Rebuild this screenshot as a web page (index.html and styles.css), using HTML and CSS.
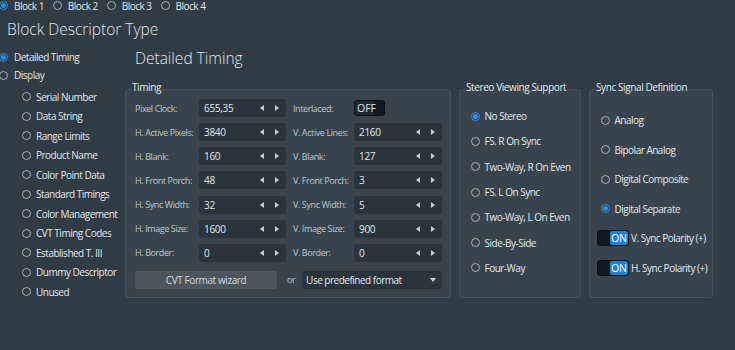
FILE: index.html
```html
<!DOCTYPE html>
<html lang="en">
<head>
    <meta charset="UTF-8">
    <title>Block Descriptor Type</title>
    <link rel="stylesheet" href="styles.css">
</head>
<body>

<div class="tabs">
    <div class="radio checked"><span class="dot"></span>Block 1</div>
    <div class="radio"><span class="dot"></span>Block 2</div>
    <div class="radio"><span class="dot"></span>Block 3</div>
    <div class="radio"><span class="dot"></span>Block 4</div>
</div>

<h1 class="page-title">Block Descriptor Type</h1>

<div class="main">
    <div class="types">
        <div class="radio top checked"><span class="dot"></span>Detailed Timing</div>
        <div class="radio top"><span class="dot"></span>Display</div>
        <div class="sub">
            <div class="radio"><span class="dot"></span>Serial Number</div>
            <div class="radio"><span class="dot"></span>Data String</div>
            <div class="radio"><span class="dot"></span>Range Limits</div>
            <div class="radio"><span class="dot"></span>Product Name</div>
            <div class="radio"><span class="dot"></span>Color Point Data</div>
            <div class="radio"><span class="dot"></span>Standard Timings</div>
            <div class="radio"><span class="dot"></span>Color Management</div>
            <div class="radio"><span class="dot"></span>CVT Timing Codes</div>
            <div class="radio"><span class="dot"></span>Established T. III</div>
            <div class="radio"><span class="dot"></span>Dummy Descriptor</div>
            <div class="radio"><span class="dot"></span>Unused</div>
        </div>
    </div>

    <div class="content">
        <h2 class="section-title">Detailed Timing</h2>

        <div class="groups">
            <fieldset class="group timing">
                <legend>Timing</legend>
                <div class="timing-grid">
                    <span class="lbl">Pixel Clock:</span>
                    <div class="spin"><span class="val">655,35</span><span class="arr-l"></span><span class="arr-r"></span></div>
                    <span class="lbl">Interlaced:</span>
                    <div><div class="toggle off"><span class="knob">OFF</span></div></div>

                    <span class="lbl">H. Active Pixels:</span>
                    <div class="spin"><span class="val">3840</span><span class="arr-l"></span><span class="arr-r"></span></div>
                    <span class="lbl">V. Active Lines:</span>
                    <div class="spin"><span class="val">2160</span><span class="arr-l"></span><span class="arr-r"></span></div>

                    <span class="lbl">H. Blank:</span>
                    <div class="spin"><span class="val">160</span><span class="arr-l"></span><span class="arr-r"></span></div>
                    <span class="lbl">V. Blank:</span>
                    <div class="spin"><span class="val">127</span><span class="arr-l"></span><span class="arr-r"></span></div>

                    <span class="lbl">H. Front Porch:</span>
                    <div class="spin"><span class="val">48</span><span class="arr-l"></span><span class="arr-r"></span></div>
                    <span class="lbl">V. Front Porch:</span>
                    <div class="spin"><span class="val">3</span><span class="arr-l"></span><span class="arr-r"></span></div>

                    <span class="lbl">H. Sync Width:</span>
                    <div class="spin"><span class="val">32</span><span class="arr-l"></span><span class="arr-r"></span></div>
                    <span class="lbl">V. Sync Width:</span>
                    <div class="spin"><span class="val">5</span><span class="arr-l"></span><span class="arr-r"></span></div>

                    <span class="lbl">H. Image Size:</span>
                    <div class="spin"><span class="val">1600</span><span class="arr-l"></span><span class="arr-r"></span></div>
                    <span class="lbl">V. Image Size:</span>
                    <div class="spin"><span class="val">900</span><span class="arr-l"></span><span class="arr-r"></span></div>

                    <span class="lbl">H. Border:</span>
                    <div class="spin"><span class="val">0</span><span class="arr-l"></span><span class="arr-r"></span></div>
                    <span class="lbl">V. Border:</span>
                    <div class="spin"><span class="val">0</span><span class="arr-l"></span><span class="arr-r"></span></div>
                </div>
                <div class="timing-foot">
                    <button class="btn">CVT Format wizard</button>
                    <span class="or">or</span>
                    <div class="combo"><span>Use predefined format</span><span class="arr-d"></span></div>
                </div>
            </fieldset>

            <fieldset class="group stereo">
                <legend>Stereo Viewing Support</legend>
                <div class="stereo-list">
                    <div class="radio checked"><span class="dot"></span>No Stereo</div>
                    <div class="radio"><span class="dot"></span>FS. R On Sync</div>
                    <div class="radio"><span class="dot"></span>Two-Way, R On Even</div>
                    <div class="radio"><span class="dot"></span>FS. L On Sync</div>
                    <div class="radio"><span class="dot"></span>Two-Way, L On Even</div>
                    <div class="radio"><span class="dot"></span>Side-By-Side</div>
                    <div class="radio"><span class="dot"></span>Four-Way</div>
                </div>
            </fieldset>

            <fieldset class="group sync">
                <legend>Sync Signal Definition</legend>
                <div class="sync-list">
                    <div class="radio"><span class="dot"></span>Analog</div>
                    <div class="radio"><span class="dot"></span>Bipolar Analog</div>
                    <div class="radio"><span class="dot"></span>Digital Composite</div>
                    <div class="radio checked"><span class="dot"></span>Digital Separate</div>
                    <div class="switch-row"><div class="toggle on"><span class="knob">ON</span></div>V. Sync Polarity (+)</div>
                    <div class="switch-row"><div class="toggle on"><span class="knob">ON</span></div>H. Sync Polarity (+)</div>
                </div>
            </fieldset>
        </div>
    </div>
</div>

</body>
</html>
```

FILE: styles.css
```css
* {
    box-sizing: border-box;
}
body {
    margin: 0;
    width: 735px;
    height: 350px;
    overflow: hidden;
    background-color: #2f3b45;
    color: #e2e7ea;
    font-family: "Open Sans", "Noto Sans", sans-serif;
    font-size: 10px;
    letter-spacing: -0.5px;
}

/* radio buttons */
.radio {
    display: flex;
    align-items: center;
    gap: 5px;
    white-space: nowrap;
}
.dot {
    flex: none;
    width: 9px;
    height: 9px;
    border: 1.3px solid #a7afb5;
    border-radius: 50%;
}
.checked .dot {
    border-color: #2e8de3;
    background: radial-gradient(circle, #2e8de3 0 2.1px, transparent 2.7px);
}

.tabs {
    display: flex;
    align-items: center;
    height: 11px;
    margin-left: -1px;
    gap: 9px;
}
.tabs .radio {
    gap: 6px;
}
.page-title {
    margin: 7px 0 0 7px;
    font-size: 15.5px;
    line-height: 22px;
    font-weight: 300;
    letter-spacing: 0;
}

.main {
    display: flex;
}
.types {
    width: 125px;
    flex: none;
    padding-top: 8px;
}
.types .top {
    height: 18px;
    gap: 6px;
    margin-left: -1px;
}
.sub {
    margin-top: 3px;
    padding-left: 22px;
}
.sub .radio {
    height: 19.5px;
}

.content {
    flex: 1;
    padding-top: 7px;
}
.section-title {
    margin: 0 0 11.5px 10px;
    font-size: 15.5px;
    line-height: 22px;
    font-weight: 300;
    letter-spacing: 0;
}

.groups {
    display: flex;
    gap: 8px;
}
.group {
    margin: 0;
    padding: 0;
    min-width: 0;
    border: 1px solid #45515a;
    border-radius: 3px;
    background-color: #38444d;
}
.group legend {
    margin-left: 5px;
    padding: 0 1px 6px;
    line-height: 12px;
    font-size: 10px;
    font-weight: 500;
    letter-spacing: -0.4px;
    color: #e6eaec;
}
.timing {
    width: 326px;
}
.stereo {
    width: 122px;
}
.sync {
    width: 124px;
}

/* timing grid */
.timing-grid {
    display: grid;
    grid-template-columns: 57px 87px 54px 88px;
    grid-auto-rows: 18px;
    column-gap: 7px;
    row-gap: 6.17px;
    align-items: center;
    margin-top: 0.5px;
    padding: 0 8px 0 9px;
}
.lbl {
    font-size: 9px;
    letter-spacing: -0.4px;
    color: #bcc4c9;
    white-space: nowrap;
}
.spin {
    display: flex;
    align-items: center;
    height: 18px;
    background-color: #2a343c;
    border-radius: 2px;
    padding: 0 4px 0 5px;
    letter-spacing: -0.3px;
}
.val {
    flex: 1;
}
.arr-l, .arr-r {
    width: 0;
    height: 0;
    border-top: 3px solid transparent;
    border-bottom: 3px solid transparent;
}
.arr-l {
    border-right: 4px solid #c9d0d5;
    margin-right: 11px;
}
.arr-r {
    border-left: 4px solid #c9d0d5;
    margin-right: 3px;
}

.timing-foot {
    display: flex;
    align-items: center;
    gap: 10px;
    margin-top: 9px;
    padding: 0 8px 8.5px 9px;
}
.btn {
    width: 142px;
    height: 18px;
    border: none;
    border-radius: 2px;
    background-color: #4a555d;
    color: #d3d9dd;
    font-family: inherit;
    font-size: 10px;
    letter-spacing: -0.4px;
    padding: 0;
}
.or {
    font-size: 9px;
    color: #bcc4c9;
    margin-right: -3px;
}
.combo {
    flex: 1;
    display: flex;
    align-items: center;
    height: 18px;
    padding: 0 6px 0 4px;
    background-color: #2a343c;
    border-radius: 2px;
}
.combo span:first-child {
    flex: 1;
}
.arr-d {
    width: 0;
    height: 0;
    border-left: 3.5px solid transparent;
    border-right: 3.5px solid transparent;
    border-top: 4px solid #c9d0d5;
}

/* stereo + sync */
.stereo-list {
    padding: 5px 0 0 10.5px;
}
.stereo-list .radio {
    height: 25.3px;
}
.sync-list {
    padding: 6.75px 0 0 10.5px;
}
.sync-list .radio, .switch-row {
    height: 29.5px;
}
.switch-row {
    display: flex;
    align-items: center;
    gap: 2px;
    margin-left: -3.5px;
    white-space: nowrap;
}

/* toggles */
.toggle {
    flex: none;
    display: flex;
    width: 32px;
    height: 16px;
    border: 1px solid #0a1318;
    border-radius: 3px;
    background-color: #0f1a20;
    overflow: hidden;
}
.knob {
    display: flex;
    align-items: center;
    font-size: 10.5px;
    letter-spacing: 0;
}
.toggle.on .knob {
    margin-left: auto;
    width: 18px;
    justify-content: center;
    background-color: #1f81d4;
    color: #ffffff;
    border-radius: 2px;
}
.toggle.off {
    width: 31px;
}
.toggle.off .knob {
    width: 19px;
    padding-left: 2px;
    background-color: #1c2830;
    color: #dfe4e7;
}
```
